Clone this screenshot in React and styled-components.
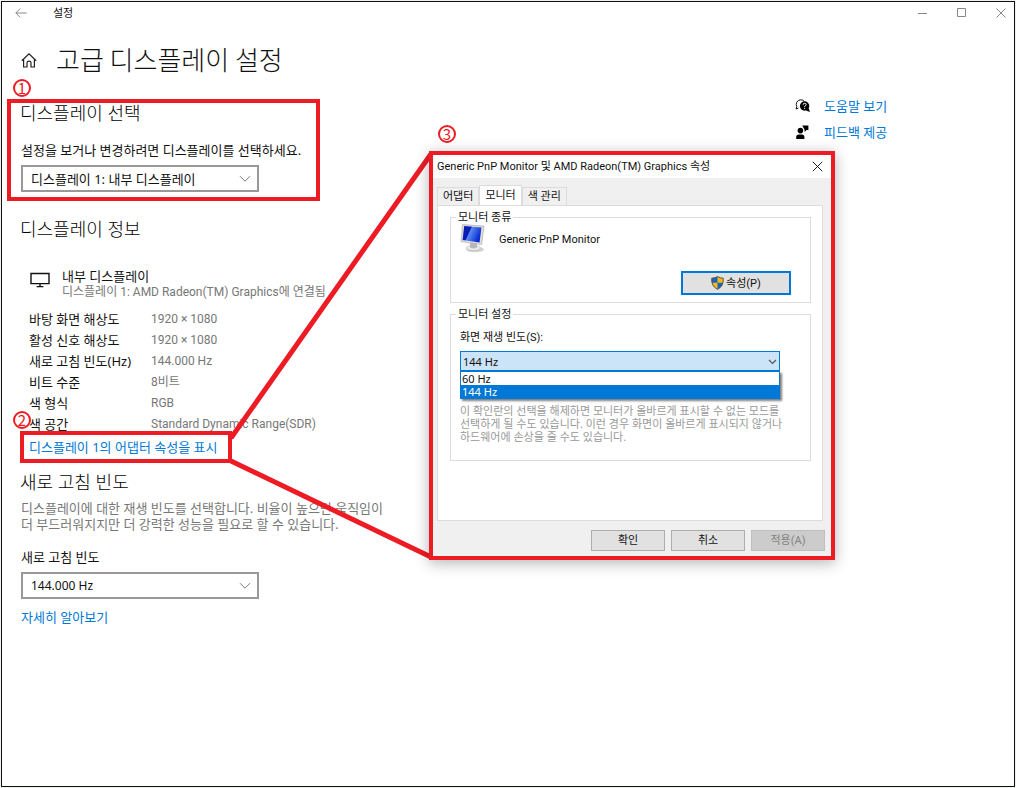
import React, { useState } from 'react';
import styled, { createGlobalStyle } from 'styled-components';

const displayInfo = [
  { label: '바탕 화면 해상도', value: '1920 × 1080' },
  { label: '활성 신호 해상도', value: '1920 × 1080' },
  { label: '새로 고침 빈도(Hz)', value: '144.000 Hz' },
  { label: '비트 수준', value: '8비트' },
  { label: '색 형식', value: 'RGB' },
  { label: '색 공간', value: 'Standard Dynamic Range(SDR)' },
];

const tabs = ['어댑터', '모니터', '색 관리'];
const rates = ['60 Hz', '144 Hz'];

const Chevron = () => (
  <svg width="12" height="8" viewBox="0 0 12 8" fill="none" stroke="currentColor">
    <path d="M1 1.2 L6 6.2 L11 1.2" />
  </svg>
);

const SmallChevron = () => (
  <svg width="9" height="6" viewBox="0 0 9 6" fill="none" stroke="currentColor" strokeWidth="1.2">
    <path d="M1 1 L4.5 4.5 L8 1" />
  </svg>
);

const BackIcon = () => (
  <svg width="12" height="10" viewBox="0 0 12 10" fill="none" stroke="currentColor">
    <path d="M5.2 0.6 L0.8 5 L5.2 9.4 M0.8 5 H11.6" />
  </svg>
);

const HomeIcon = () => (
  <svg width="16" height="16" viewBox="0 0 16 16" fill="none" stroke="#222" strokeWidth="1.2">
    <path d="M0.8 8.8 L8 1.8 L15.2 8.8 M2.6 7.2 V15 H6 V10.8 Q6 9.2 8 9.2 Q10 9.2 10 10.8 V15 H13.4 V7.2" />
  </svg>
);

const DisplayIcon = () => (
  <svg width="20" height="16" viewBox="0 0 20 16" fill="none" stroke="#111" strokeWidth="1.4">
    <path d="M1 1.5 H19 V11.6 H1 Z M10 11.6 V14.4 M6.6 14.6 H13.4" />
  </svg>
);

const HelpIcon = () => (
  <svg width="16" height="16" viewBox="0 0 16 16">
    <path d="M3.4 10 L1 11 L1.8 8.6 A4.6 4.6 0 0 1 5.4 1.8 A4.8 4.8 0 0 1 9.4 3.4" fill="none" stroke="#111" />
    <circle cx="9.6" cy="8" r="4.7" fill="#000" />
    <path d="M11 12.4 L15 14 L13.6 10 Z" fill="#000" />
    <path d="M8 6.8 Q8 5.3 9.6 5.3 Q11.2 5.3 11.2 6.7 Q11.2 7.5 9.6 8.4 V9 M9.6 9.8 V10.9" fill="none" stroke="#fff" />
  </svg>
);

const FeedbackIcon = () => (
  <svg width="16" height="16" viewBox="0 0 16 16" fill="#000">
    <circle cx="5.4" cy="6.6" r="2.8" />
    <path d="M1.2 15 V13 Q1.2 10.4 3.8 10.4 H6.8 Q9.4 10.4 9.4 13 V15 Z" />
    <path d="M7.2 1.4 H13.4 V6 H11.6 L9.6 8 V6 L8.8 4.2 Z" />
  </svg>
);

const MonitorIcon = () => (
  <svg width="28" height="30" viewBox="0 0 28 30">
    <defs>
      <linearGradient id="screen" x1="0" y1="0" x2="1" y2="0.4">
        <stop offset="0" stopColor="#0a1f9c" />
        <stop offset="0.42" stopColor="#0a1cc0" />
        <stop offset="0.46" stopColor="#5d8cf2" />
        <stop offset="1" stopColor="#0a2bd0" />
      </linearGradient>
    </defs>
    <ellipse cx="15" cy="25.4" rx="9" ry="2.8" fill="#d2d2d2" />
    <ellipse cx="13.4" cy="24" rx="7" ry="2.6" fill="#ececec" stroke="#aaa" strokeWidth="0.5" />
    <path d="M10 18 H17 L17 23.4 Q13 25.4 10 23.4 Z" fill="#b8b8b8" />
    <path d="M2.6 0.6 L24 2 L21.6 20.6 L1 17.6 Z" fill="#dcdcdc" stroke="#a5a5a5" strokeWidth="0.6" />
    <path d="M4.2 2 L21.4 3.4 L19.6 18.4 L2.6 16 Z" fill="url(#screen)" />
  </svg>
);

const ShieldIcon = () => (
  <svg width="13" height="14" viewBox="0 0 13 14">
    <path d="M6.5 0.6 Q9 2.2 12.2 2.2 Q13 10 6.5 13.4 Q0 10 0.8 2.2 Q4 2.2 6.5 0.6 Z" fill="#fdb813" />
    <path d="M6.5 0.6 V6.8 H0.9 Q0.6 4.4 0.8 2.2 Q4 2.2 6.5 0.6 Z M6.5 6.8 H12.1 Q11.4 11 6.5 13.4 Z" fill="#1767c0" />
    <path d="M6.5 0.6 Q9 2.2 12.2 2.2 Q13 10 6.5 13.4 Q0 10 0.8 2.2 Q4 2.2 6.5 0.6 Z" fill="none" stroke="#555" />
  </svg>
);

const App = () => {
  const [rate, setRate] = useState('144 Hz');
  const [curTab, setCurTab] = useState('모니터');

  return (
    <>
      <GlobalStyle />
      <SettingsWindow>
        <TitleBar>
          <BackButton aria-label="뒤로"><BackIcon /></BackButton>
          <WindowName>설정</WindowName>
          <WindowButton aria-label="최소화">
            <svg width="10" height="10" stroke="currentColor"><path d="M0 5.5 H9" /></svg>
          </WindowButton>
          <WindowButton aria-label="최대화">
            <svg width="10" height="10" fill="none" stroke="currentColor"><path d="M0.5 0.5 H8.5 V8.5 H0.5 Z" /></svg>
          </WindowButton>
          <WindowButton aria-label="닫기">
            <svg width="10" height="10" stroke="currentColor"><path d="M0.5 0.5 L9.5 9.5 M9.5 0.5 L0.5 9.5" /></svg>
          </WindowButton>
        </TitleBar>

        <PageHeader>
          <HomeIcon />
          <PageTitle>고급 디스플레이 설정</PageTitle>
        </PageHeader>

        <Content>
          <Main>
            <SelectSection>
              <SectionTitle>디스플레이 선택</SectionTitle>
              <FieldLabel htmlFor="display">설정을 보거나 변경하려면 디스플레이를 선택하세요.</FieldLabel>
              <SelectBox>
                <Select id="display">
                  <option>디스플레이 1: 내부 디스플레이</option>
                </Select>
                <Chevron />
              </SelectBox>
              <SelectMark />
              <Step $left={-8} $top={-22}>1</Step>
            </SelectSection>

            <InfoSection>
              <SectionTitle>디스플레이 정보</SectionTitle>
              <Device>
                <DisplayIcon />
                <div>
                  <DeviceName>내부 디스플레이</DeviceName>
                  <DeviceDesc>디스플레이 1: AMD Radeon(TM) Graphics에 연결됨</DeviceDesc>
                </div>
              </Device>
              <InfoList>
                {displayInfo.map((item) => (
                  <React.Fragment key={item.label}>
                    <dt>{item.label}</dt>
                    <dd>{item.value}</dd>
                  </React.Fragment>
                ))}
              </InfoList>
              <AdapterRow>
                <TextLink href="#adapter">디스플레이 1의 어댑터 속성을 표시</TextLink>
                <LinkMark />
                <Step $left={-8} $top={-26}>2</Step>
              </AdapterRow>
            </InfoSection>

            <RateSection>
              <SectionTitle>새로 고침 빈도</SectionTitle>
              <Description>
                디스플레이에 대한 재생 빈도를 선택합니다. 비율이 높으면 움직임이
                <br />더 부드러워지지만 더 강력한 성능을 필요로 할 수 있습니다.
              </Description>
              <FieldLabel htmlFor="refresh">새로 고침 빈도</FieldLabel>
              <SelectBox>
                <Select id="refresh" $small>
                  <option>144.000 Hz</option>
                </Select>
                <Chevron />
              </SelectBox>
              <MoreLink href="#more">자세히 알아보기</MoreLink>
            </RateSection>
          </Main>

          <Aside>
            <AsideLink href="#help"><HelpIcon />도움말 보기</AsideLink>
            <AsideLink href="#feedback"><FeedbackIcon />피드백 제공</AsideLink>
          </Aside>
        </Content>

        <Connector width="440" height="570">
          <path d="M229 436 L429 152 M229 459 L429 555" />
        </Connector>

        <Dialog role="dialog" aria-labelledby="dialog-title">
          <Step $left={5} $top={-30}>3</Step>
          <DialogBar>
            <DialogTitle id="dialog-title">Generic PnP Monitor 및 AMD Radeon(TM) Graphics 속성</DialogTitle>
            <CloseButton aria-label="닫기">
              <svg width="11" height="11" stroke="#222"><path d="M0.8 0.8 L10.2 10.2 M10.2 0.8 L0.8 10.2" /></svg>
            </CloseButton>
          </DialogBar>
          <DialogBody>
            <TabList role="tablist">
              {tabs.map((tab) => (
                <Tab key={tab} role="tab" aria-selected={tab === curTab} $active={tab === curTab} onClick={() => setCurTab(tab)}>
                  {tab}
                </Tab>
              ))}
            </TabList>
            <TabPanel role="tabpanel">
              <Group>
                <legend>모니터 종류</legend>
                <MonitorRow>
                  <MonitorIcon />
                  <span>Generic PnP Monitor</span>
                </MonitorRow>
                <PropertyButton><ShieldIcon />속성(P)</PropertyButton>
              </Group>
              <Group>
                <legend>모니터 설정</legend>
                <RateLabel htmlFor="rate">화면 재생 빈도(S):</RateLabel>
                <Combo>
                  <ComboSelect id="rate" value={rate} onChange={(e) => setRate(e.target.value)}>
                    {rates.map((item) => <option key={item}>{item}</option>)}
                  </ComboSelect>
                  <SmallChevron />
                  <RateList role="listbox">
                    {rates.map((item) => (
                      <RateOption key={item} role="option" aria-selected={item === rate} $active={item === rate} onClick={() => setRate(item)}>
                        {item}
                      </RateOption>
                    ))}
                  </RateList>
                </Combo>
                <Hint>
                  이 확인란의 선택을 해제하면 모니터가 올바르게 표시할 수 없는 모드를
                  <br />선택하게 될 수도 있습니다. 이런 경우 화면이 올바르게 표시되지 않거나
                  <br />하드웨어에 손상을 줄 수도 있습니다.
                </Hint>
              </Group>
            </TabPanel>
            <DialogFooter>
              <DialogButton>확인</DialogButton>
              <DialogButton>취소</DialogButton>
              <DialogButton disabled>적용(A)</DialogButton>
            </DialogFooter>
          </DialogBody>
        </Dialog>
      </SettingsWindow>
    </>
  );
};

export default App;

const red = '#ed1c24';
const blue = '#0078d7';
const wideFont = '"Noto Sans", "Noto Sans CJK KR", sans-serif';
const narrowFont = 'Roboto, "Noto Sans CJK KR", sans-serif';

const GlobalStyle = createGlobalStyle`
  * {
    box-sizing: border-box;
  }
  body {
    margin: 0;
    background: #f0f2f0;
    color: #111;
    font-family: ${wideFont};
    font-size: 13px;
    line-height: 20px;
  }
  button, select {
    font: inherit;
    color: inherit;
    padding: 0;
  }
  svg {
    flex: none;
  }
`;

const SettingsWindow = styled.div`
  position: relative;
  margin: 1px;
  min-height: calc(100vh - 2px);
  background: #fff;
  border: 1px solid #111;
`;

const TitleBar = styled.header`
  display: flex;
  align-items: center;
  height: 22px;
  color: #888;
`;

const BackButton = styled.button`
  display: flex;
  width: 38px;
  margin-right: 13px;
  justify-content: center;
  border: 0;
  background: none;
`;

const WindowName = styled.span`
  flex: 1;
  font-size: 11px;
  color: #111;
`;

const WindowButton = styled.button`
  display: flex;
  width: 39px;
  align-items: center;
  justify-content: center;
  border: 0;
  background: none;

  &:last-child {
    margin-right: -6px;
  }
`;

const PageHeader = styled.div`
  display: flex;
  align-items: center;
  gap: 19px;
  height: 40px;
  margin-top: 16px;
  padding-left: 19px;
`;

const PageTitle = styled.h1`
  margin: 0;
  font-family: "Noto Sans CJK KR", sans-serif;
  font-size: 26px;
  font-weight: 300;
  line-height: 38px;
  padding-bottom: 2px;
`;

const Content = styled.div`
  display: flex;
  justify-content: space-between;
  padding-top: 21px;
`;

const Main = styled.main`
  padding-left: 19px;
`;

const SectionTitle = styled.h2`
  margin: 0 0 0 -1px;
  color: #000;
  font-size: 18px;
  font-weight: 300;
  line-height: 24px;
`;

const SelectSection = styled.section`
  position: relative;
`;

const InfoSection = styled.section`
  margin-top: 25px;
`;

const RateSection = styled.section`
  margin-top: 13px;
`;

const FieldLabel = styled.label`
  display: block;
  margin: 15px 0 5px;
`;

const SelectBox = styled.div`
  position: relative;
  width: 238px;

  svg {
    position: absolute;
    right: 8px;
    top: 10px;
    color: #777;
    pointer-events: none;
  }
`;

const Select = styled.select`
  display: block;
  width: 100%;
  height: 27px;
  padding-left: 8px;
  appearance: none;
  border: 2px solid #999;
  border-radius: 0;
  background: #fff;
  font-size: ${(props) => (props.$small ? '12px' : '13px')};
`;

const Device = styled.div`
  display: flex;
  align-items: flex-start;
  gap: 12px;
  margin: 27px 0 9px;
  padding-left: 9px;
  line-height: 16px;

  svg {
    margin-top: 4px;
  }
`;

const DeviceName = styled.div`
  font-size: 13px;
`;

const DeviceDesc = styled.div`
  font-family: ${narrowFont};
  font-size: 12px;
  color: #777;
`;

const InfoList = styled.dl`
  display: grid;
  grid-template-columns: 122px auto;
  margin: 0;
  padding-left: 8px;
  line-height: 21px;

  dd {
    margin: 0;
    font-family: ${narrowFont};
    font-size: 12px;
    color: #777;
  }
`;

const AdapterRow = styled.div`
  position: relative;
  margin-top: 2px;
  padding-left: 8px;
`;

const TextLink = styled.a`
  color: ${blue};
  text-decoration: none;
`;

const MoreLink = styled(TextLink)`
  display: block;
  margin-top: 8px;
`;

const Description = styled.p`
  margin: 6px 0 0;
  line-height: 16px;
  color: #777;
`;

const Aside = styled.aside`
  width: 219px;
  margin-top: -5px;
  display: flex;
  flex-direction: column;
  align-items: flex-start;
  gap: 6px;
`;

const AsideLink = styled(TextLink)`
  display: flex;
  align-items: center;
  gap: 13px;
`;

// red annotations
const SelectMark = styled.div`
  position: absolute;
  top: -2px;
  left: -14px;
  width: 313px;
  bottom: -9px;
  border: 4px solid ${red};
  pointer-events: none;
`;

const LinkMark = styled.div`
  position: absolute;
  top: -6px;
  left: -1px;
  width: 212px;
  bottom: -6px;
  border: 4px solid ${red};
  pointer-events: none;
`;

const Step = styled.span`
  position: absolute;
  left: ${(props) => props.$left}px;
  top: ${(props) => props.$top}px;
  width: 18px;
  height: 18px;
  border: 2px solid ${red};
  border-radius: 50%;
  color: ${red};
  font-family: "Noto Sans CJK KR", sans-serif;
  font-size: 15px;
  line-height: 14px;
  text-align: center;
`;

const Connector = styled.svg`
  position: absolute;
  left: 0;
  top: 0;
  fill: none;
  stroke: ${red};
  stroke-width: 5;
  pointer-events: none;
`;

// monitor properties dialog
const Dialog = styled.div`
  position: absolute;
  left: 427px;
  top: 149px;
  width: 406px;
  border: 4px solid ${red};
  background: #f0f0f0;
  box-shadow: 0 3px 14px rgba(0, 0, 0, 0.3);
  font-family: ${narrowFont};
  font-size: 11px;
  line-height: 13px;
`;

const DialogBar = styled.div`
  display: flex;
  align-items: center;
  justify-content: space-between;
  height: 23px;
  padding: 0 8px 0 4px;
  background: #fff;
`;

const DialogTitle = styled.span`
  white-space: nowrap;
`;

const CloseButton = styled.button`
  display: flex;
  border: 0;
  background: none;
`;

const DialogBody = styled.div`
  padding: 7px 6px 5px 4px;
`;

const TabList = styled.div`
  display: flex;
  align-items: flex-end;
  height: 20px;
`;

const Tab = styled.button`
  height: ${(props) => (props.$active ? '20px' : '18px')};
  padding: 0 5px;
  border: 1px solid #dcdcdc;
  border-bottom: 0;
  background: ${(props) => (props.$active ? '#fff' : '#f0f0f0')};
`;

const TabPanel = styled.div`
  height: 316px;
  margin-right: 2px;
  padding: 5px 11px 0 12px;
  border: 1px solid #dcdcdc;
  background: #fff;
`;

const Group = styled.fieldset`
  margin: 0 0 5px;
  padding: 0 9px;
  border: 1px solid #dcdcdc;

  legend {
    margin-left: -4px;
    padding: 0 2px;
  }

  &:first-child {
    height: 92px;
  }

  &:last-child {
    height: 153px;
  }
`;

const MonitorRow = styled.div`
  display: flex;
  gap: 11px;
  line-height: 32px;
`;

const PropertyButton = styled.button`
  display: flex;
  align-items: center;
  justify-content: center;
  gap: 2px;
  width: 110px;
  height: 24px;
  margin: 15px 10px 0 auto;
  border: 2px solid ${blue};
  background: #e1e1e1;
`;

const RateLabel = styled.label`
  display: block;
  margin: 10px 0 7px;
`;

const Combo = styled.div`
  position: relative;
  width: 320px;

  svg {
    position: absolute;
    right: 3px;
    top: 8px;
    color: #555;
    pointer-events: none;
  }
`;

const ComboSelect = styled.select`
  display: block;
  width: 100%;
  height: 20px;
  padding-left: 2px;
  appearance: none;
  border: 1px solid ${blue};
  border-radius: 0;
  background: #cce4f7;
  font-family: ${wideFont};
`;

const RateList = styled.ul`
  position: absolute;
  left: 0;
  right: 0;
  top: 20px;
  margin: 0;
  padding: 0;
  list-style: none;
  border: 1px solid ${blue};
  background: #fff;
  box-shadow: 2px 2px 2px rgba(0, 0, 0, 0.5);
  font-family: ${wideFont};
`;

const RateOption = styled.li`
  padding-left: 1px;
  background: ${(props) => (props.$active ? blue : '#fff')};
  color: ${(props) => (props.$active ? '#fff' : '#111')};
`;

const Hint = styled.p`
  margin: 33px 0 0;
  font-family: ${wideFont};
  color: #999;
  white-space: nowrap;
`;

const DialogFooter = styled.div`
  display: flex;
  justify-content: flex-end;
  gap: 6px;
  margin-top: 9px;
`;

const DialogButton = styled.button`
  width: 74px;
  height: 21px;
  border: 1px solid #adadad;
  background: #e1e1e1;

  &:disabled {
    border-color: #bfbfbf;
    background: #ccc;
    color: #838383;
  }
`;
